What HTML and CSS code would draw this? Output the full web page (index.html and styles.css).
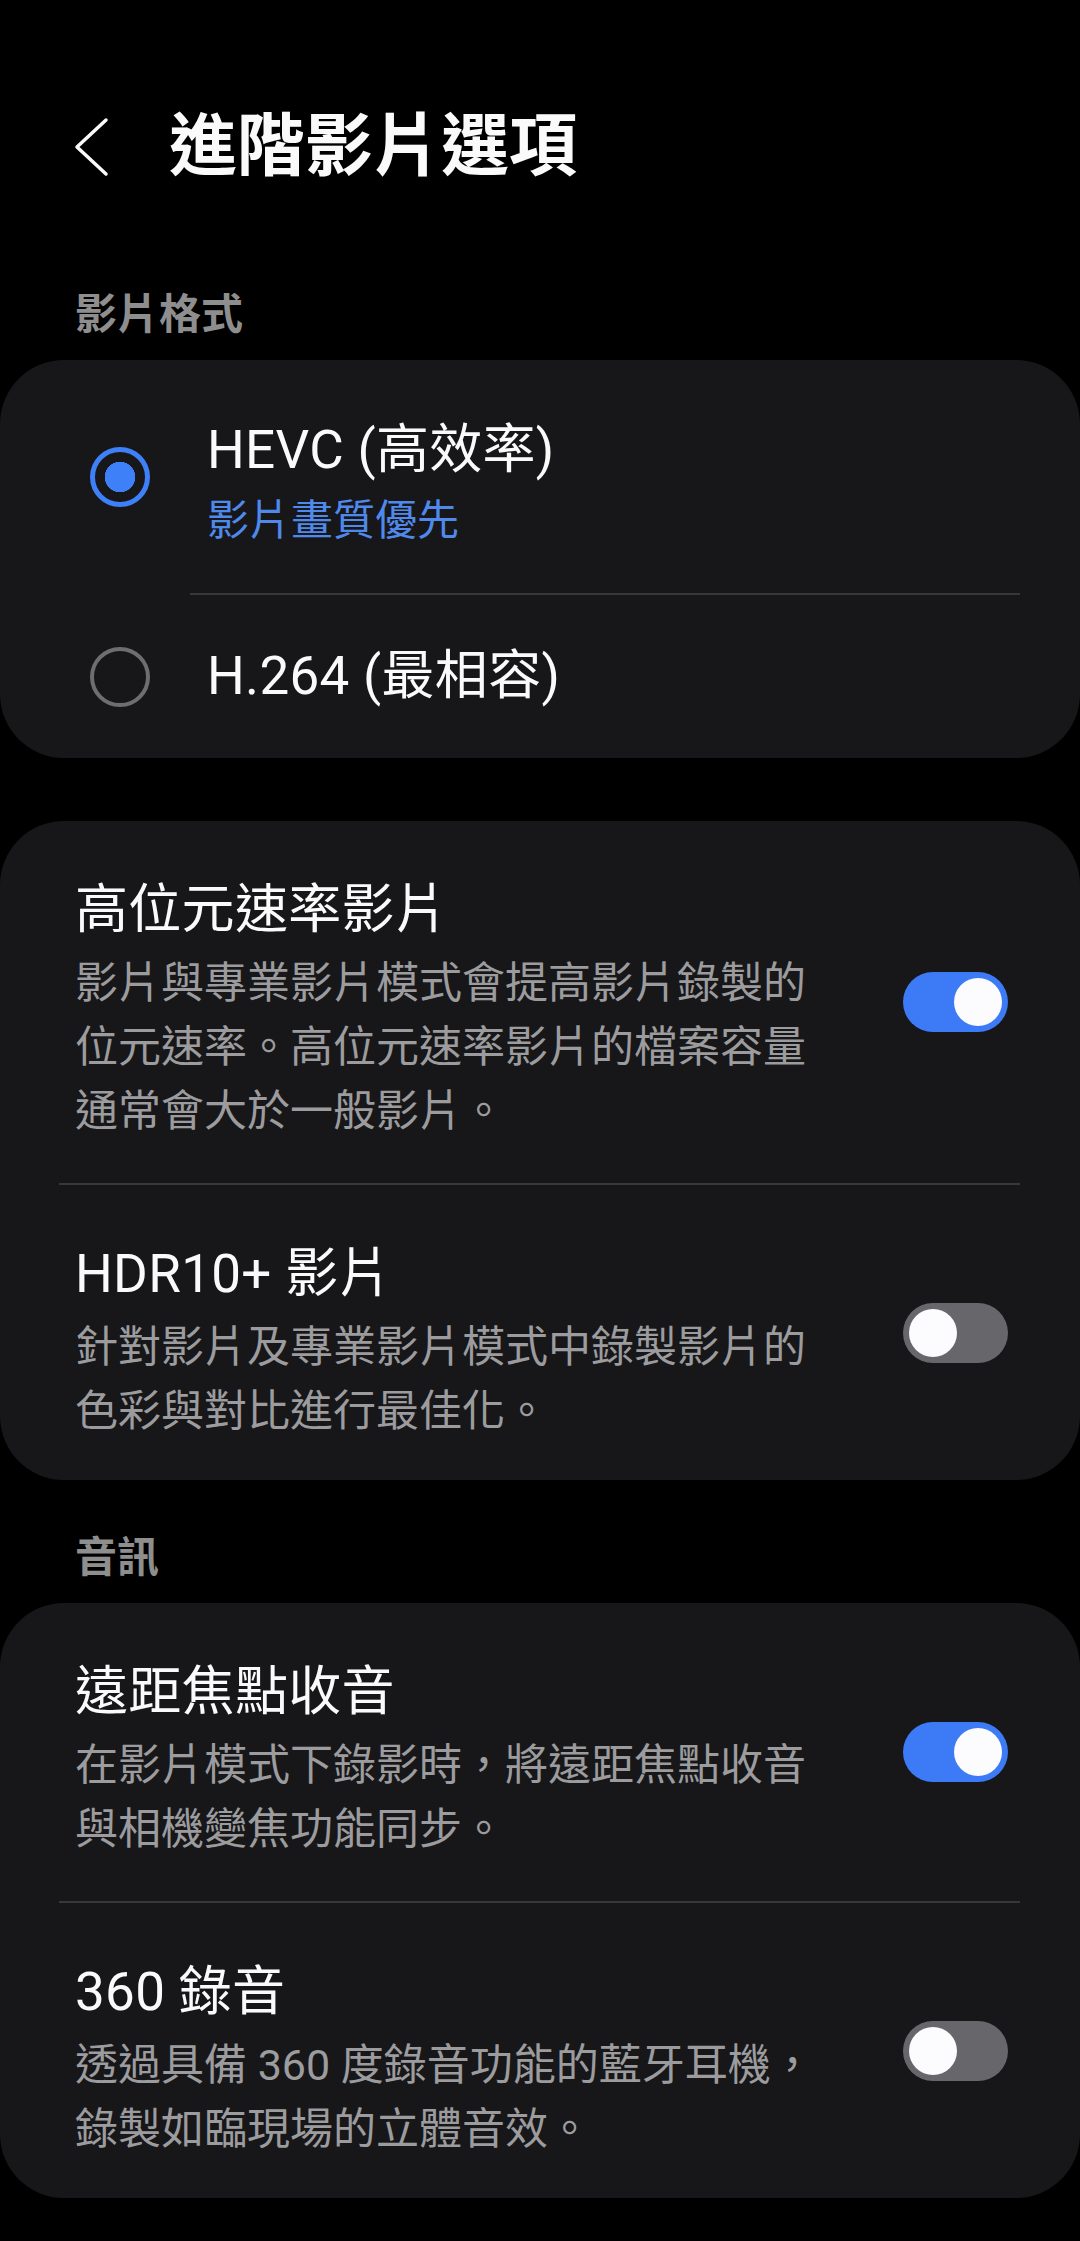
FILE: index.html
```html
<!DOCTYPE html>
<html lang="zh-Hant">
<head>
    <meta charset="UTF-8">
    <meta name="viewport" content="width=device-width, initial-scale=1.0">
    <title>進階影片選項</title>
    <link rel="stylesheet" href="styles.css">
</head>
<body>
    <div class="appbar">
        <button class="back" aria-label="返回">
            <svg width="40" height="60" viewBox="0 0 40 60">
                <path d="M34 3 L5 30 L34 57" fill="none" stroke="#fafafa" stroke-width="3.5" stroke-linecap="round" stroke-linejoin="round"/>
            </svg>
        </button>
        <h1>進階影片選項</h1>
    </div>

    <div class="section-title">影片格式</div>
    <div class="card">
        <div class="radio-row first">
            <span class="radio checked"></span>
            <div class="radio-text">
                <div class="item-title">HEVC (高效率)</div>
                <div class="item-sub">影片畫質優先</div>
            </div>
        </div>
        <div class="divider inset"></div>
        <div class="radio-row">
            <span class="radio"></span>
            <div class="radio-text">
                <div class="item-title">H.264 (最相容)</div>
            </div>
        </div>
    </div>

    <div class="card spaced">
        <div class="switch-row">
            <div class="switch-text">
                <div class="item-title">高位元速率影片</div>
                <div class="item-desc">影片與專業影片模式會提高影片錄製的位元速率。高位元速率影片的檔案容量通常會大於一般影片。</div>
            </div>
            <span class="switch on"></span>
        </div>
        <div class="divider"></div>
        <div class="switch-row">
            <div class="switch-text">
                <div class="item-title">HDR10+ 影片</div>
                <div class="item-desc">針對影片及專業影片模式中錄製影片的色彩與對比進行最佳化。</div>
            </div>
            <span class="switch"></span>
        </div>
    </div>

    <div class="section-title">音訊</div>
    <div class="card">
        <div class="switch-row">
            <div class="switch-text">
                <div class="item-title">遠距焦點收音</div>
                <div class="item-desc">在影片模式下錄影時，將遠距焦點收音與相機變焦功能同步。</div>
            </div>
            <span class="switch on"></span>
        </div>
        <div class="divider"></div>
        <div class="switch-row">
            <div class="switch-text">
                <div class="item-title">360 錄音</div>
                <div class="item-desc">透過具備 360 度錄音功能的藍牙耳機，錄製如臨現場的立體音效。</div>
            </div>
            <span class="switch"></span>
        </div>
    </div>
</body>
</html>
```

FILE: styles.css
```css
body {
    margin: 0;
    background: #000;
    color: #fafafa;
    font-family: Roboto, "Noto Sans CJK TC", sans-serif;
}
.appbar {
    display: flex;
    align-items: center;
    height: 181px;
    padding-top: 56px;
    padding-left: 72px;
}
.back {
    background: none;
    border: none;
    padding: 0;
    width: 40px;
    height: 60px;
    margin-right: 57px;
    display: flex;
}
h1 {
    margin: 0;
    font-size: 68px;
    font-weight: 700;
    line-height: 90px;
}
.section-title {
    padding: 50px 75px 17px;
    font-size: 42px;
    line-height: 56px;
    font-weight: 700;
    color: #8e8e8e;
}
.card {
    background: #171719;
    border-radius: 64px;
}
.card.spaced {
    margin-top: 63px;
}
.divider {
    height: 2px;
    background: #38383b;
    margin: 0 60px 0 59px;
}
.divider.inset {
    margin-left: 190px;
}
.item-title {
    font-size: 53px;
    line-height: 68px;
    letter-spacing: 0.3px;
}
.item-sub {
    font-size: 42px;
    line-height: 56px;
    color: #5089ec;
    margin-top: 9px;
}
.item-desc {
    font-size: 43px;
    line-height: 64px;
    color: #9c9c9f;
    margin-top: 7px;
}

/* radio rows */
.radio-row {
    display: flex;
    align-items: center;
    padding-left: 90px;
}
.radio-text {
    padding: 47px 0 48px 57px;
}
.radio-row.first .radio-text {
    padding: 56px 0 44px 57px;
}
.radio {
    width: 60px;
    height: 60px;
    box-sizing: border-box;
    border-radius: 50%;
    border: 4.5px solid #6e6e70;
    flex-shrink: 0;
}
.radio.checked {
    border: 5.5px solid #3e80f7;
    background: radial-gradient(circle, #3e80f7 0 15px, transparent 15.5px);
}

/* switch rows */
.switch-row {
    display: flex;
    align-items: center;
    padding: 0 72px 0 75px;
}
.switch-text {
    flex: 1;
    padding: 55px 0 40px;
}
.switch-row:last-child .switch-text {
    padding-bottom: 37px;
}
.switch {
    position: relative;
    width: 105px;
    height: 60px;
    border-radius: 30px;
    background: #67676b;
    margin-left: 76px;
    flex-shrink: 0;
}
.switch::after {
    content: "";
    position: absolute;
    top: 6px;
    left: 6px;
    width: 48px;
    height: 48px;
    border-radius: 50%;
    background: #fcfcff;
}
.switch.on {
    background: #3d7bf6;
}
.switch.on::after {
    left: auto;
    right: 6px;
}
```
